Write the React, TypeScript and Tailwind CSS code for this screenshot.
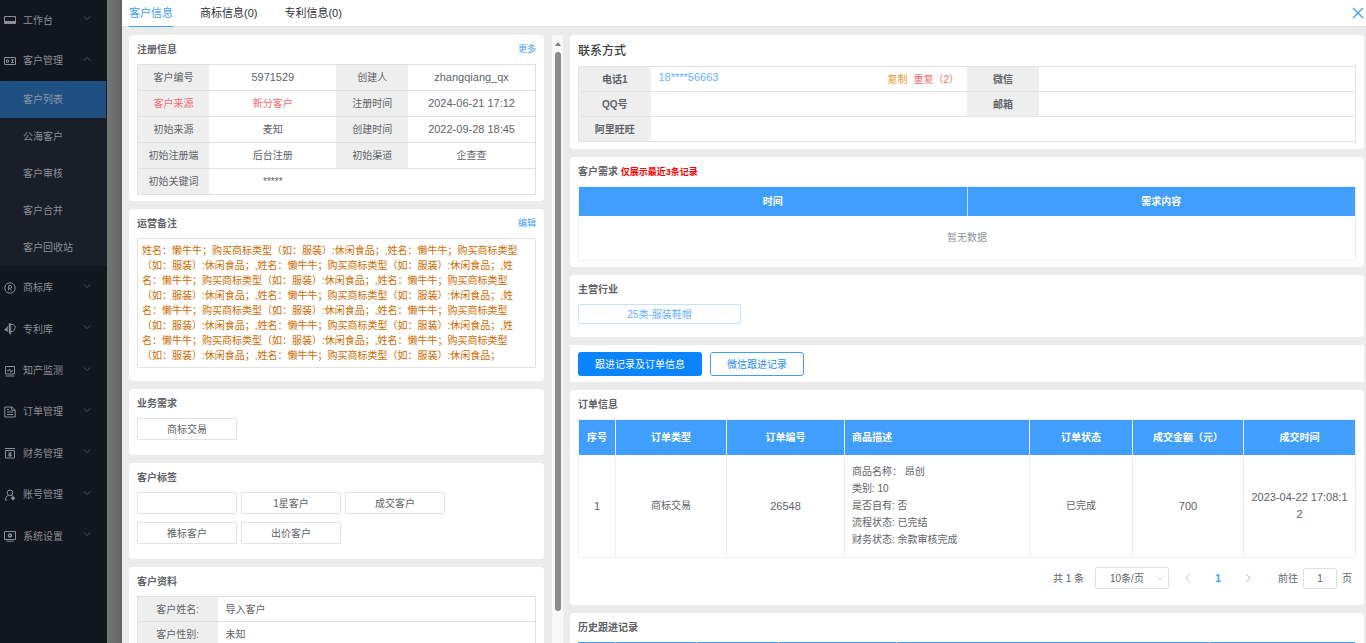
import type { ReactNode } from "react";

const NOTE = Array(12).fill("姓名：懒牛牛；购买商标类型（如：服装）:休闲食品；").join(",");

const icons: Record<string, ReactNode> = {
  desk: (
    <>
      <path d="M.5 2.500h11v7H.5z" />
      <path d="M1 7.500h10v2H1z" fill="currentColor" />
    </>
  ),
  card: (
    <>
      <path d="M.5 2.500h11v7H.5z" />
      <path d="M2.500 5h2v2.200h-2zM7 5h2.800M8.500 4.500v3M7 7.500h2.800" />
    </>
  ),
  mark: (
    <>
      <circle cx="6" cy="6" r="5.200" />
      <path d="M4.700 8.500v-5h1.600a1.300 1.300 0 0 1 0 2.700H4.700M6.200 6.200l1.300 2.300" />
    </>
  ),
  patent: (
    <>
      <path d="M7 1.500h1.700c3.200 0 3.200 5.500 0 7H7" />
      <path d="M5 .5h1.800v11L5 10zM3.500 3.500v5L.5 7z" fill="currentColor" strokeWidth=".5" />
    </>
  ),
  monitor: (
    <path d="M1.500 1.500h9v7.500h-9zM1.500 11h9M3 5.800h1.500L5.500 4l1.300 3.200.9-1.400H9" />
  ),
  order: (
    <path d="M.8 1h7.400l3 3v7H.8zM7.800 1v3.300h3.200M3 6h6M3 8.500h6M3 3.500h2" />
  ),
  money: (
    <path d="M1 1.500h10M1.500 3.500h9V11h-9zM4.500 5L6 6.500 7.500 5M4.200 7h3.600M4.200 8.700h3.600M6 6.500V10" />
  ),
  user: (
    <>
      <circle cx="6" cy="3.800" r="2.800" />
      <path d="M4.500 6.200C2.500 7 1.400 8.600 1.200 11h2M7.500 6.200l1.500 1" />
      <circle cx="9" cy="9.200" r="1.400" fill="currentColor" />
    </>
  ),
  setting: (
    <>
      <path d="M.5 1.500h11v8H.5zM2.500 11.200h7" />
      <circle cx="6" cy="5.500" r="1.500" strokeWidth="1.400" />
    </>
  ),
};

const subMenu = ["客户列表", "公海客户", "客户审核", "客户合并", "客户回收站"];

const bottomMenu = [
  { icon: "mark", label: "商标库" },
  { icon: "patent", label: "专利库" },
  { icon: "monitor", label: "知产监测" },
  { icon: "order", label: "订单管理" },
  { icon: "money", label: "财务管理" },
  { icon: "user", label: "账号管理" },
  { icon: "setting", label: "系统设置" },
];

const registerRows = [
  ["客户编号", "5971529", "创建人", "zhangqiang_qx"],
  ["客户来源", "新分客户", "注册时间", "2024-06-21 17:12"],
  ["初始来源", "麦知", "创建时间", "2022-09-28 18:45"],
  ["初始注册端", "后台注册", "初始渠道", "企查查"],
  ["初始关键词", "*****"],
];

function Chevron({ className, d = "M1 3l4 4 4-4" }: { className?: string; d?: string }) {
  return (
    <svg viewBox="0 0 10 10" className={className} fill="none" stroke="currentColor">
      <path d={d} />
    </svg>
  );
}

function MenuItem({ icon, label, open }: { icon: string; label: string; open?: boolean }) {
  return (
    <button className="flex w-full items-center pl-1 pr-4 text-left text-[#8d8f93]">
      <svg
        viewBox="0 0 12 12"
        className="h-3 w-3 shrink-0"
        fill="none"
        stroke="currentColor"
        strokeWidth="1"
      >
        {icons[icon]}
      </svg>
      <span className="ml-[7px] flex-1">{label}</span>
      <Chevron className="mb-1 h-2 w-2 text-[#5c5f66]" d={open ? "M1 7l4-4 4 4" : "M1 3l4 4 4-4"} />
    </button>
  );
}

function Sidebar() {
  return (
    <aside className="w-[107px] shrink-0 bg-[#11161f] text-[10px]">
      <nav>
        <div className="grid h-[81px] auto-rows-fr">
          <MenuItem icon="desk" label="工作台" />
          <MenuItem icon="card" label="客户管理" open />
        </div>
        <ul className="bg-[#191e29]">
          {subMenu.map((label, i) => (
            <li key={label}>
              <a
                href="#"
                className={
                  i === 0
                    ? "mr-px flex h-[37px] items-center bg-[#205081] pl-[23px] text-[#8d9aa8]"
                    : "flex h-[37px] items-center pl-[23px] text-[#8d8f93]"
                }
              >
                {label}
              </a>
            </li>
          ))}
        </ul>
        <div className="grid h-[291px] auto-rows-fr pt-px">
          {bottomMenu.map((m) => (
            <MenuItem key={m.label} icon={m.icon} label={m.label} />
          ))}
        </div>
      </nav>
    </aside>
  );
}

function Card({
  title,
  extra,
  className = "",
  children,
}: {
  title: ReactNode;
  extra?: string;
  className?: string;
  children: ReactNode;
}) {
  return (
    <section className={`shrink-0 rounded bg-white px-2 ${className}`}>
      <div className="flex h-[29px] items-center justify-between">
        <h2 className="font-bold text-[#606266]">{title}</h2>
        {extra && (
          <a href="#" className="text-[9px] text-[#409eff]">
            {extra}
          </a>
        )}
      </div>
      {children}
    </section>
  );
}

function Tag({ children }: { children?: ReactNode }) {
  return (
    <span className="flex h-[22px] w-[100px] items-center justify-center rounded-xs border border-[#e2e2e2]">
      {children}
    </span>
  );
}

function LeftColumn() {
  return (
    <div className="flex w-[415px] shrink-0 flex-col gap-2 overflow-hidden">
      <Card title="注册信息" extra="更多" className="pb-[6px]">
        <table className="w-full table-fixed border border-[#e0e0e0] text-center">
          <colgroup>
            <col className="w-[18%]" />
            <col className="w-[32%]" />
            <col className="w-[18%]" />
            <col className="w-[32%]" />
          </colgroup>
          <tbody>
            {registerRows.map((row, r) => (
              <tr key={row[0]} className="h-[26px] border-b border-[#e0e0e0]">
                <th className={`bg-[#eeeeee] font-normal ${r === 1 ? "text-[#f56c6c]" : ""}`}>{row[0]}</th>
                <td className={r === 1 ? "text-[#f56c6c]" : /^\d/.test(row[1]) ? "text-[11px]" : ""}>
                  {row[1]}
                </td>
                {row[2] ? (
                  <>
                    <th className="bg-[#eeeeee] font-normal">{row[2]}</th>
                    <td className={/^\w/.test(row[3]) ? "text-[11px]" : ""}>{row[3]}</td>
                  </>
                ) : (
                  <td colSpan={2} />
                )}
              </tr>
            ))}
          </tbody>
        </table>
      </Card>

      <Card title="运营备注" extra="编辑" className="pb-[13px]">
        <p className="rounded-xs border border-[#e2e2e2] px-1 py-1 leading-[15px] text-[#cf6a00]">{NOTE}</p>
      </Card>

      <Card title="业务需求" className="pb-[15px]">
        <Tag>商标交易</Tag>
      </Card>

      <Card title="客户标签" className="pb-[15px]">
        <div className="flex flex-wrap gap-x-1 gap-y-2 pr-12">
          <Tag />
          <Tag>1星客户</Tag>
          <Tag>成交客户</Tag>
          <Tag>推标客户</Tag>
          <Tag>出价客户</Tag>
        </div>
      </Card>

      <Card title="客户资料" className="pb-2">
        <table className="w-full border border-[#e0e0e0]">
          <tbody>
            {[
              ["客户姓名:", "导入客户"],
              ["客户性别:", "未知"],
            ].map(([k, v]) => (
              <tr key={k} className="h-[25px] border-b border-[#e0e0e0]">
                <th className="w-[80px] bg-[#eeeeee] text-center font-normal">{k}</th>
                <td className="pl-2">{v}</td>
              </tr>
            ))}
          </tbody>
        </table>
      </Card>
    </div>
  );
}

function ScrollBar() {
  return (
    <div className="ml-2 flex w-[11px] shrink-0 flex-col items-center bg-[#f8f8f8]">
      <svg viewBox="0 0 6 4" className="mt-[7px] h-1 w-1.5 shrink-0" fill="#7c7c7c">
        <path d="M3 0l3 4H0z" />
      </svg>
      <div className="mt-[6px] h-[92%] w-1.5 rounded-full bg-[#8b8b8b]" />
    </div>
  );
}

function ContactCard() {
  const label = "w-[72px] bg-[#eeeeee] text-center font-bold";
  return (
    <section className="shrink-0 rounded bg-white px-2 pb-[7px]">
      <h2 className="flex h-[31px] items-center text-xs font-medium text-[#3d3f42]">联系方式</h2>
      <table className="w-full table-fixed border border-[#e4e4e4]">
        <tbody>
          <tr className="h-[25px] border-b border-[#e4e4e4]">
            <th className={label}>电话1</th>
            <td className="px-2">
              <div className="flex items-center justify-between">
                <a href="#" className="pb-1 text-[11px] leading-3 text-[#66b1ff]">
                  18****56663
                </a>
                <span className="flex gap-1.5">
                  <button className="text-[#f0961e]">复制</button>
                  <button className="text-[#f56c6c]">重复（2）</button>
                </span>
              </div>
            </td>
            <th className={label}>微信</th>
            <td />
          </tr>
          <tr className="h-[25px] border-b border-[#e4e4e4]">
            <th className={label}>QQ号</th>
            <td />
            <th className={label}>邮箱</th>
            <td />
          </tr>
          <tr className="h-[25px]">
            <th className={label}>阿里旺旺</th>
            <td colSpan={3} />
          </tr>
        </tbody>
      </table>
    </section>
  );
}

const orderColumns = [
  { name: "序号", width: "w-[37px]" },
  { name: "订单类型", width: "w-[111px]" },
  { name: "订单编号", width: "w-[118px]" },
  { name: "商品描述", width: "w-[185px]" },
  { name: "订单状态", width: "w-[103px]" },
  { name: "成交金额（元）", width: "w-[111px]" },
  { name: "成交时间", width: "" },
];

const historyColumns = ["w-[37px]", "w-[81px]", "w-[82px]", "w-[118px]", "w-[313px]", ""];

function Pagination() {
  return (
    <div className="flex h-[40px] items-center justify-end pr-1">
      <span>共 1 条</span>
      <span className="relative ml-[11px]">
        <select
          aria-label="每页条数"
          className="h-[22px] w-[74px] appearance-none rounded-xs border border-[#dcdfe6] bg-white pl-[14px]"
        >
          <option>10条/页</option>
        </select>
        <Chevron className="pointer-events-none absolute top-[7px] right-[5px] h-2 w-2 text-[#c0c4cc]" />
      </span>
      <button aria-label="上一页" className="ml-[15px] text-[#b4b8c0]">
        <Chevron className="h-2 w-2" d="M7 0L2.500 5 7 10" />
      </button>
      <button className="w-[52px] text-[11px] font-bold text-[#409eff]">1</button>
      <button aria-label="下一页" className="text-[#a0a4ac]">
        <Chevron className="h-2 w-2" d="M3 0l4.500 5L3 10" />
      </button>
      <label className="ml-[26px] flex items-center gap-[5px]">
        前往
        <input
          defaultValue="1"
          className="h-[21px] w-[34px] rounded-xs border border-[#dcdfe6] text-center"
        />
        页
      </label>
    </div>
  );
}

function RightColumn() {
  return (
    <div className="mr-[2px] ml-[7px] flex min-w-0 flex-1 flex-col gap-2 overflow-hidden">
      <ContactCard />

      <Card
        title={
          <>
            客户需求 <span className="text-[9px] font-bold text-[#ff0000]">仅展示最近3条记录</span>
          </>
        }
        className="pb-[6px]"
      >
        <table className="w-full table-fixed border border-[#ebeef5]">
          <thead>
            <tr className="h-[29px] bg-[#409eff] text-white">
              <th className="border-r border-[#c6e0fb]">时间</th>
              <th>需求内容</th>
            </tr>
          </thead>
          <tbody>
            <tr className="h-[45px]">
              <td colSpan={2} className="text-center text-[#909399]">
                暂无数据
              </td>
            </tr>
          </tbody>
        </table>
      </Card>

      <Card title="主营行业" className="pb-[13px]">
        <button className="flex h-5 w-[163px] items-center justify-center rounded-xs border border-[#c6e2ff] text-[#66b1ff]">
          25类-服装鞋帽
        </button>
      </Card>

      <div className="flex shrink-0 gap-2 bg-white px-2 pt-[7px] pb-[6px]">
        <button className="h-6 rounded-[3px] bg-[#0a84ff] px-[17px] text-white">跟进记录及订单信息</button>
        <button className="h-6 rounded-[3px] border border-[#409eff] px-4 text-[#2a8cf5]">微信跟进记录</button>
      </div>

      <Card title="订单信息" className="pb-[7px]">
        <table className="w-full table-fixed border border-[#ebeef5] text-center">
          <thead>
            <tr className="h-[35px] bg-[#409eff] text-white">
              {orderColumns.map((c) => (
                <th
                  key={c.name}
                  className={`${c.width} border-r border-[#ebeef5] ${c.name === "商品描述" ? "pl-[7px] text-left" : ""}`}
                >
                  {c.name}
                </th>
              ))}
            </tr>
          </thead>
          <tbody>
            <tr className="h-[103px] *:border-r *:border-[#ebeef5]">
              <td className="text-[11px]">1</td>
              <td>商标交易</td>
              <td className="text-[11px]">26548</td>
              <td className="pl-[7px] text-left leading-[17px]">
                <p>商品名称： 昂创</p>
                <p>类别: 10</p>
                <p>是否自有: 否</p>
                <p>流程状态: 已完结</p>
                <p>财务状态: 余款审核完成</p>
              </td>
              <td>已完成</td>
              <td className="text-[11px]">700</td>
              <td className="px-[7px] text-[11px] leading-[17px] break-all">2023-04-22 17:08:12</td>
            </tr>
          </tbody>
        </table>
        <Pagination />
      </Card>

      <Card title="历史跟进记录" className="pb-2">
        <table className="w-full table-fixed">
          <thead>
            <tr className="h-[35px] bg-[#409eff]">
              {historyColumns.map((width, i) => (
                <th key={i} className={`${width} border-r border-[#ebeef5]`} />
              ))}
            </tr>
          </thead>
        </table>
      </Card>
    </div>
  );
}

export default function App() {
  return (
    <div className="flex h-screen overflow-hidden bg-[#7a7b7b] font-['Liberation_Sans','Noto_Sans_CJK_SC',sans-serif] text-[10px] text-[#606266]">
      <Sidebar />
      <div className="w-[15px] shrink-0 bg-linear-to-r from-[#767777] to-[#626262]" />
      <main className="flex min-w-0 flex-1 flex-col bg-[#ebebeb]">
        <header className="flex h-[27px] shrink-0 items-stretch justify-between border-b border-[#e0e3ea] bg-white pr-[2px] pl-[7px]">
          <div role="tablist" className="flex gap-[27px] text-[11px] text-[#303133]">
            <button role="tab" className="-mb-px border-b border-[#409eff] text-[#409eff]">
              客户信息
            </button>
            <button role="tab">商标信息(0)</button>
            <button role="tab">专利信息(0)</button>
          </div>
          <button aria-label="关闭" className="text-[#409eff]">
            <svg viewBox="0 0 12 12" className="h-3 w-3" fill="none" stroke="currentColor" strokeWidth="1.400">
              <path d="M1 1l10 10M11 1L1 11" />
            </svg>
          </button>
        </header>
        <div className="flex min-h-0 flex-1 pt-2 pl-[7px]">
          <LeftColumn />
          <ScrollBar />
          <RightColumn />
        </div>
      </main>
    </div>
  );
}
